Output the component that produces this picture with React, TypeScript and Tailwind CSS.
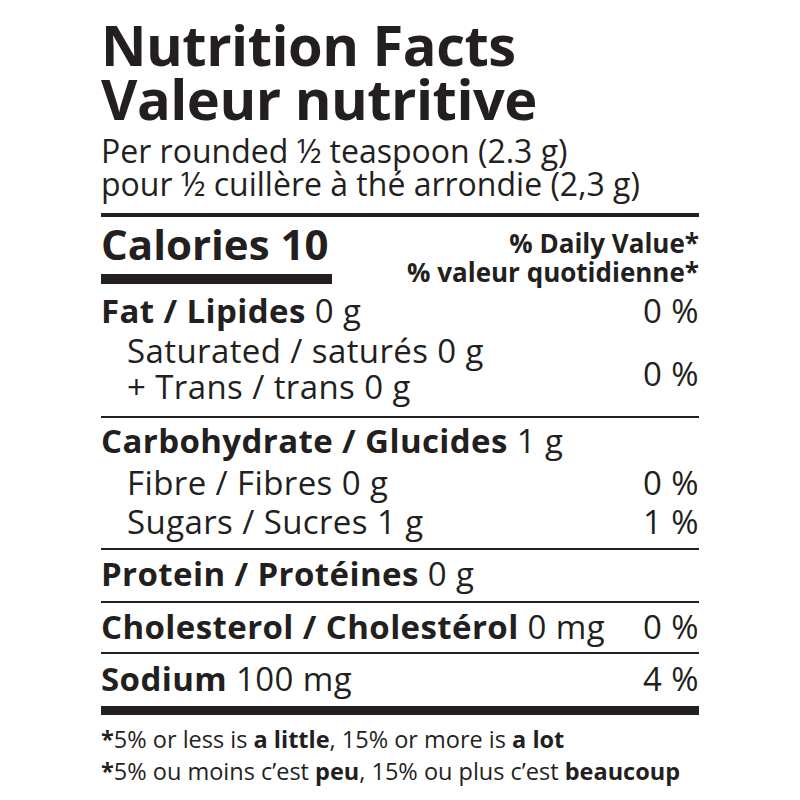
import React from "react";

const Rule = ({ cls }: { cls: string }) => <div className={`w-full bg-[#231f20] ${cls}`} />;

const Star = () => <span className="font-bold">*</span>;

export default function App() {
  return (
    <div className="w-[800px] h-[800px] bg-white text-[#231f20]" style={{ fontFamily: '"Open Sans", "Noto Sans", sans-serif' }}>
      <div className="w-[598px] mx-auto pt-[17px]">
        <div className="text-[56px] leading-[54px] font-bold tracking-[-0.5px]">
          <div>Nutrition Facts</div>
          <div>Valeur nutritive</div>
        </div>
        <div className="mt-[9px] text-[32px] leading-[33px]">
          <div>Per rounded ½ teaspoon (2.3 g)</div>
          <div>pour ½ cuillère à thé arrondie (2,3 g)</div>
        </div>
        <Rule cls="mt-[13px] h-[4px]" />
        <div className="flex justify-between items-start">
          <div className="pt-[5px]">
            <div className="text-[42px] leading-[44px] font-bold">Calories 10</div>
            <div className="mt-[8px] h-[10px] w-[231px] bg-[#231f20]" />
          </div>
          <div className="pt-[12px] text-right text-[26px] leading-[29px] font-bold">
            <div>% Daily Value*</div>
            <div>% valeur quotidienne*</div>
          </div>
        </div>
        <div className="text-[33px] leading-[35px] tracking-[0.4px]">
          <div className="mt-[6px] flex justify-between">
            <div><span className="font-bold">Fat / Lipides</span> 0 g</div>
            <div>0 %</div>
          </div>
          <div className="mt-[5px] flex justify-between items-start">
            <div className="pl-[26px] leading-[36px]">
              <div>Saturated / saturés 0 g</div>
              <div>+ Trans / trans 0 g</div>
            </div>
            <div className="mt-[23px]">0 %</div>
          </div>
          <Rule cls="mt-[11px] h-[2px]" />
          <div className="mt-[5px]"><span className="font-bold">Carbohydrate / Glucides</span> 1 g</div>
          <div className="mt-[7px] flex justify-between">
            <div className="pl-[26px]">Fibre / Fibres 0 g</div>
            <div>0 %</div>
          </div>
          <div className="mt-[4px] flex justify-between">
            <div className="pl-[26px]">Sugars / Sucres 1 g</div>
            <div>1 %</div>
          </div>
          <Rule cls="mt-[9px] h-[2px]" />
          <div className="mt-[6px]"><span className="font-bold">Protein / Protéines</span> 0 g</div>
          <Rule cls="mt-[10px] h-[2px]" />
          <div className="mt-[6px] flex justify-between">
            <div><span className="font-bold">Cholesterol / Cholestérol</span> 0 mg</div>
            <div>0 %</div>
          </div>
          <Rule cls="mt-[8px] h-[2px]" />
          <div className="mt-[7px] flex justify-between">
            <div><span className="font-bold">Sodium</span> 100 mg</div>
            <div>4 %</div>
          </div>
          <Rule cls="mt-[10px] h-[9px]" />
        </div>
        <div className="mt-[8px] text-[23.5px] leading-[32px]">
          <div><Star />5% or less is <span className="font-bold">a little</span>, 15% or more is <span className="font-bold">a lot</span></div>
          <div><Star />5% ou moins c’est <span className="font-bold">peu</span>, 15% ou plus c’est <span className="font-bold">beaucoup</span></div>
        </div>
      </div>
    </div>
  );
}
